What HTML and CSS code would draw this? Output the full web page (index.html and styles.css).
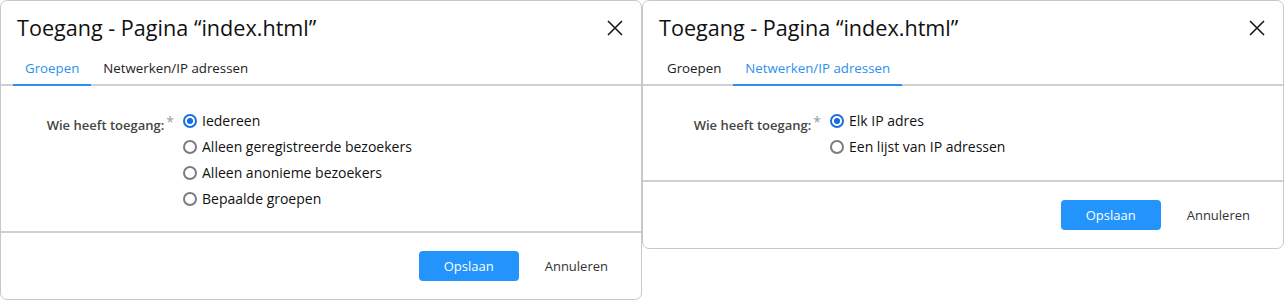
FILE: index.html
```html
<!DOCTYPE html>
<html lang="nl">

<head>
    <meta charset="UTF-8">
    <meta name="viewport" content="width=device-width, initial-scale=1.0">
    <title>Toegang</title>
    <link rel="stylesheet" href="styles.css">
</head>

<body>
    <div class="dialogs">
        <!-- Tab: Groepen -->
        <div class="dialog">
            <div class="dialog-header">
                <h2 class="dialog-title">Toegang - Pagina “index.html”</h2>
                <button class="close-btn" aria-label="Sluiten">
                    <svg width="16" height="16" viewBox="0 0 16 16">
                        <path d="M1 1 L15 15 M15 1 L1 15" stroke="#1a1a1a" stroke-width="1.6" fill="none" />
                    </svg>
                </button>
            </div>
            <div class="tabs">
                <div class="tab active">Groepen</div>
                <div class="tab">Netwerken/IP adressen</div>
            </div>
            <div class="dialog-body">
                <div class="form-row">
                    <div class="form-label">Wie heeft toegang:<span class="required">*</span></div>
                    <div class="radio-list">
                        <label class="radio"><input type="radio" name="groups" checked> Iedereen</label>
                        <label class="radio"><input type="radio" name="groups"> Alleen geregistreerde bezoekers</label>
                        <label class="radio"><input type="radio" name="groups"> Alleen anonieme bezoekers</label>
                        <label class="radio"><input type="radio" name="groups"> Bepaalde groepen</label>
                    </div>
                </div>
            </div>
            <div class="dialog-footer">
                <button class="btn btn-primary">Opslaan</button>
                <button class="btn btn-link">Annuleren</button>
            </div>
        </div>

        <!-- Tab: Netwerken/IP adressen -->
        <div class="dialog dialog-ip">
            <div class="dialog-header">
                <h2 class="dialog-title">Toegang - Pagina “index.html”</h2>
                <button class="close-btn" aria-label="Sluiten">
                    <svg width="16" height="16" viewBox="0 0 16 16">
                        <path d="M1 1 L15 15 M15 1 L1 15" stroke="#1a1a1a" stroke-width="1.6" fill="none" />
                    </svg>
                </button>
            </div>
            <div class="tabs">
                <div class="tab">Groepen</div>
                <div class="tab active">Netwerken/IP adressen</div>
            </div>
            <div class="dialog-body">
                <div class="form-row">
                    <div class="form-label">Wie heeft toegang:<span class="required">*</span></div>
                    <div class="radio-list">
                        <label class="radio"><input type="radio" name="ip" checked> Elk IP adres</label>
                        <label class="radio"><input type="radio" name="ip"> Een lijst van IP adressen</label>
                    </div>
                </div>
            </div>
            <div class="dialog-footer">
                <button class="btn btn-primary">Opslaan</button>
                <button class="btn btn-link">Annuleren</button>
            </div>
        </div>
    </div>
</body>

</html>
```

FILE: styles.css
```css
body {
    margin: 0;
    font-family: "Open Sans", "Noto Sans", sans-serif;
    background-color: #fff;
    color: #1a1a1a;
}

.dialogs {
    display: grid;
    grid-template-columns: 642px 642px;
    align-items: start;
}

.dialog {
    background-color: #fff;
    border: 1px solid #c8c8c8;
    border-radius: 7px;
    height: 300px;
    box-sizing: border-box;
    display: flex;
    flex-direction: column;
}

.dialog-ip {
    height: 249px;
}

.dialog-header {
    display: flex;
    align-items: center;
    justify-content: space-between;
    padding: 13px 18px 12px 16px;
    height: 28px;
    box-sizing: content-box;
}

.dialog-title {
    margin: 0;
    font-size: 21.6px;
    line-height: 28px;
    font-weight: 400;
    color: #111;
}

.close-btn {
    border: none;
    background: none;
    padding: 0;
    width: 16px;
    height: 16px;
    cursor: pointer;
}

.tabs {
    display: flex;
    padding: 0 12px;
    border-bottom: 2px solid #cfcfcf;
    height: 30px;
}

.tab {
    padding: 0 12px;
    font-size: 13.3px;
    line-height: 28px;
    color: #222;
    border-bottom: 2px solid transparent;
    margin-bottom: -2px;
}

.tab.active {
    color: #2d8ff0;
    border-bottom-color: #2d8ff0;
}

.dialog-body {
    flex: 1;
    padding: 22px 0 0;
}

.form-row {
    display: grid;
    grid-template-columns: 173px 1fr;
    column-gap: 9px;
}

.dialog-ip .form-row {
    grid-template-columns: 178px 1fr;
}

.form-label {
    text-align: right;
    font-size: 13px;
    font-weight: 600;
    color: #454545;
    line-height: 26px;
    padding-top: 1px;
}

.required {
    color: #9a9a9a;
    font-weight: 400;
    margin-left: 2px;
    vertical-align: 3px;
    font-size: 14px;
}

.radio-list {
    display: flex;
    flex-direction: column;
}

.radio {
    display: flex;
    align-items: center;
    gap: 5px;
    font-size: 14px;
    line-height: 26px;
    color: #111;
}

.radio input {
    appearance: none;
    margin: 0;
    width: 14px;
    height: 14px;
    border: 2px solid #7c7c84;
    border-radius: 50%;
    box-sizing: border-box;
}

.radio input:checked {
    border: 2px solid #1a6fe0;
    background: radial-gradient(circle, #1a6fe0 0 2.8px, #fff 3.3px);
}

.dialog-footer {
    border-top: 2px solid #cfcfcf;
    display: flex;
    justify-content: flex-end;
    align-items: center;
    gap: 10px;
    padding: 0 17px 1px 0;
    height: 68px;
    box-sizing: border-box;
}

.btn {
    font-family: inherit;
    font-size: 13px;
    height: 30px;
    border-radius: 4px;
    cursor: pointer;
}

.btn-primary {
    width: 100px;
    border: none;
    background-color: #2394fb;
    color: #fff;
}

.btn-link {
    background: none;
    border: none;
    color: #333;
    padding: 0 16px;
}
```
